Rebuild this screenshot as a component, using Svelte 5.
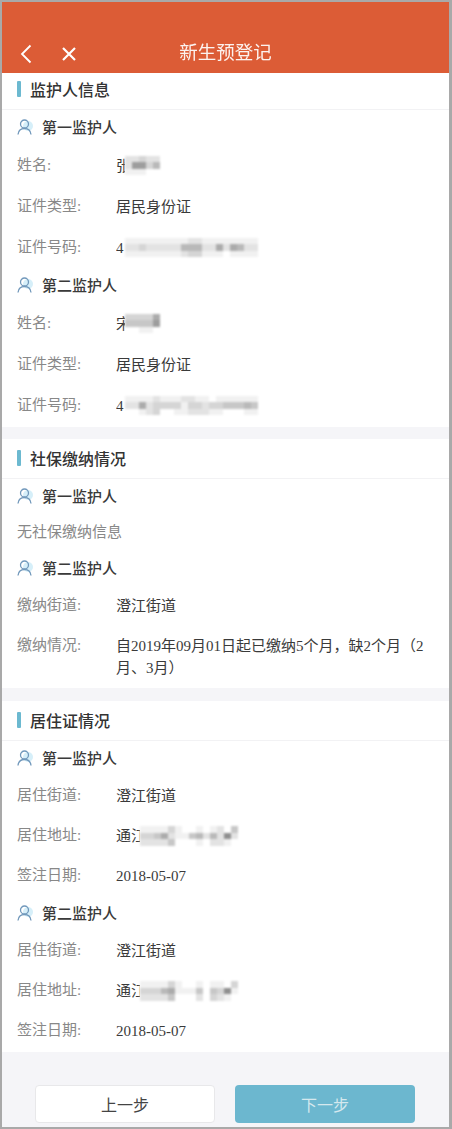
<script>
  // each mosaic is rows of hex digits: 0 = white, f = dark grey
  const nameA = ['22322', '27735', '11100'];
  const nameB = ['33336', '44447', '00110'];
  const idA = ['1111111112211111111', '2232222255522626522', '1111111123311101111'];
  const idB = ['1111211122110111111', '2262333313323344454', '0012300112221100011'];
  const addrA = ['11113100101204', '33462114525282', '22224000102210'];
  const addrB = ['11113100101103', '33356111404381', '22224000203210'];

  const shade = (d) => {
    const v = 255 - parseInt(d, 16) * 14;
    return `rgb(${v},${v},${v})`;
  };

  const sections = [
    {
      title: '监护人信息',
      groups: [
        {
          who: '第一监护人',
          rows: [
            { label: '姓名:', lead: '张', mosaic: nameA },
            { label: '证件类型:', value: '居民身份证' },
            { label: '证件号码:', lead: '4', mosaic: idA }
          ]
        },
        {
          who: '第二监护人',
          rows: [
            { label: '姓名:', lead: '宋', mosaic: nameB },
            { label: '证件类型:', value: '居民身份证' },
            { label: '证件号码:', lead: '4', mosaic: idB }
          ]
        }
      ]
    },
    {
      title: '社保缴纳情况',
      groups: [
        { who: '第一监护人', note: '无社保缴纳信息', rows: [] },
        {
          who: '第二监护人',
          rows: [
            { label: '缴纳街道:', value: '澄江街道' },
            { label: '缴纳情况:', value: '自2019年09月01日起已缴纳5个月，缺2个月（2月、3月）' }
          ]
        }
      ]
    },
    {
      title: '居住证情况',
      groups: [
        {
          who: '第一监护人',
          rows: [
            { label: '居住街道:', value: '澄江街道' },
            { label: '居住地址:', lead: '通江', mosaic: addrA },
            { label: '签注日期:', value: '2018-05-07' }
          ]
        },
        {
          who: '第二监护人',
          rows: [
            { label: '居住街道:', value: '澄江街道' },
            { label: '居住地址:', lead: '通江', mosaic: addrB },
            { label: '签注日期:', value: '2018-05-07' }
          ]
        }
      ]
    }
  ];
</script>

<div class="frame">
  <header>
    <svg class="back" viewBox="0 0 12 20" width="12" height="20">
      <path d="M10.5 1.5 2 10l8.5 8.5" fill="none" stroke="#fff" stroke-width="1.8" />
    </svg>
    <svg class="close" viewBox="0 0 14 14" width="14" height="14">
      <path d="M1 1l12 12M13 1 1 13" fill="none" stroke="#fff" stroke-width="2.2" />
    </svg>
    <h1>新生预登记</h1>
  </header>

  <main>
    {#each sections as s, i}
      <section class:tight={i > 0}>
        <h2><i></i>{s.title}</h2>
        {#each s.groups as g}
          <div class="who">
            <svg viewBox="0 0 16 16" width="16" height="16">
              <circle cx="11" cy="7" r="5" fill="#d6eff9" />
              <circle cx="7.500" cy="5" r="4" fill="none" stroke="#7198bb" stroke-width="1.300" />
              <path d="M1 15.500c.4-3.800 3-6 6.500-6s6.100 2.200 6.500 6" fill="none" stroke="#7198bb" stroke-width="1.300" />
            </svg>
            {g.who}
          </div>
          {#if g.note}
            <p class="note">{g.note}</p>
          {/if}
          {#each g.rows as r}
            <div class="row">
              <span class="label">{r.label}</span>
              {#if r.mosaic}
                <span class="value masked">
                  <span class="lead" class:half={r.lead.length > 1}>{r.lead}</span>
                  <span class="mosaic">
                    {#each r.mosaic as line}
                      <span class="line">
                        {#each line.split('') as d}
                          <b style="background:{shade(d)}"></b>
                        {/each}
                      </span>
                    {/each}
                  </span>
                </span>
              {:else}
                <span class="value">{r.value}</span>
              {/if}
            </div>
          {/each}
        {/each}
      </section>
    {/each}
  </main>

  <footer>
    <button class="prev">上一步</button>
    <button class="next">下一步</button>
  </footer>
</div>

<style>
  :global(body) {
    margin: 0;
    background: #a9a9a9;
  }

  .frame {
    box-sizing: border-box;
    width: 452px;
    height: 1129px;
    border: solid #a9a9a9;
    border-width: 2px 3px 2px 2px;
    background: #f5f5f8;
    overflow: hidden;
    font-family: "Liberation Serif", "Noto Sans CJK SC", serif;
    color: #333;
  }

  header {
    position: relative;
    z-index: 1;
    height: 71px;
    background: #dc5c36;
    display: flex;
    align-items: flex-end;
    justify-content: center;
  }

  h1 {
    margin: 0 0 9px;
    font-size: 18.500px;
    line-height: 26px;
    font-weight: 400;
    color: #fff;
    font-family: "Noto Sans CJK SC", sans-serif;
    opacity: 0.92;
  }

  .back {
    position: absolute;
    left: 18px;
    top: 42px;
  }

  .close {
    position: absolute;
    left: 60px;
    top: 45px;
  }

  main {
    margin-top: -3px;
  }

  section {
    background: #fff;
    margin-bottom: 12px;
    padding-bottom: 1px;
  }

  section:nth-child(2) {
    padding-bottom: 0;
    margin-bottom: 13px;
  }

  h2 {
    box-sizing: content-box;
    margin: 0;
    height: 37px;
    padding: 0 0 2px 15px;
    display: flex;
    align-items: center;
    gap: 9px;
    font-size: 16px;
    font-weight: 500;
    color: #333;
    border-bottom: 1px solid #f2f2f4;
    font-family: "Noto Sans CJK SC", sans-serif;
  }

  h2 i {
    width: 4px;
    height: 16px;
    border-radius: 1px;
    background: #6cb9d0;
  }

  .who {
    height: 33px;
    padding: 0 0 2px 15px;
    display: flex;
    align-items: center;
    gap: 9px;
    font-size: 15px;
    font-weight: 500;
    color: #3a3a3a;
    font-family: "Noto Sans CJK SC", sans-serif;
  }

  .note {
    margin: 0;
    padding: 7px 15px 8px;
    font-size: 15px;
    line-height: 22px;
    color: #888;
  }

  .row {
    display: flex;
    padding: 9.500px 15px;
    font-size: 15px;
    line-height: 22px;
  }

  .tight .row {
    padding: 9px 15px;
  }

  .label {
    flex: 0 0 99px;
    color: #888;
    margin-top: -1px;
  }

  .value {
    flex: 1;
    color: #3a3a3a;
  }

  .masked {
    display: flex;
    align-items: center;
  }

  .lead {
    display: block;
    width: 9px;
    overflow: hidden;
    white-space: nowrap;
  }

  .lead.half {
    width: 24px;
  }

  .mosaic {
    display: block;
    filter: blur(0.800px);
  }

  .line {
    display: flex;
  }

  .line b {
    display: block;
    width: 7px;
    height: 6.500px;
  }

  footer {
    display: flex;
    justify-content: center;
    gap: 20px;
    padding: 21px 1px 0 0;
  }

  button {
    width: 180px;
    height: 38px;
    border-radius: 4px;
    font: 400 16px "Noto Sans CJK SC", sans-serif;
  }

  .prev {
    background: #fff;
    border: 1px solid #e8e8ea;
    color: #444;
  }

  .next {
    background: #6cb7cf;
    border: 0;
    color: #d5e8ee;
  }
</style>
